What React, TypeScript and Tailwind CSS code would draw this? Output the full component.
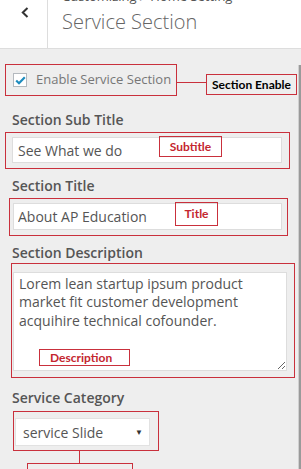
import React from 'react';

const Annotation: React.FC<{ text: string; className: string; dark?: boolean }> = ({ text, className, dark }) => (
  <div
    className={`absolute flex items-center justify-center border border-[#c9303c] bg-white/0 font-['Lato',sans-serif] text-[12px] font-bold ${
      dark ? 'text-black' : 'text-[#c4262f]'
    } ${className}`}
  >
    {text}
  </div>
);

const FieldLabel: React.FC<{ children: React.ReactNode; className?: string }> = ({ children, className }) => (
  <div className={`ml-[12px] text-[14px] leading-[20px] font-semibold text-[#555] ${className ?? ''}`}>{children}</div>
);

export default function App() {
  return (
    <div className="flex h-[469px] w-[301px] flex-col overflow-hidden bg-[#eeeeee] font-['Open_Sans',sans-serif] text-[#555]">
      {/* Header */}
      <header className="flex h-[49px] shrink-0 border-b border-[#dddddd] bg-white">
        <div className="flex h-full w-[48px] justify-center border-r border-[#dddddd] pl-[2px] pt-[7px]">
          <svg width="8" height="11" viewBox="0 0 8 11" fill="none">
            <polyline points="6.5,1 1.8,5.5 6.5,10" stroke="#333" strokeWidth="2" />
          </svg>
        </div>
        <div className="flex flex-col pl-[14px]">
          <span className="-mt-[12px] text-[13px] leading-[16px] text-[#555]">Customizing ▸ Home Setting</span>
          <span className="mt-[4px] text-[20px] font-light leading-[28px] text-[#666]">Service Section</span>
        </div>
      </header>

      <div className="flex flex-1">
        <main className="flex flex-1 flex-col">
          {/* Enable */}
          <div className="relative mt-[15px]">
            <label className="ml-[5px] flex h-[32px] w-[172px] items-center gap-[9px] border border-[#c9303c] pl-[7px]">
              <span className="flex h-[14px] w-[14px] items-center justify-center border border-[#b4b9be] bg-white">
                <svg width="11" height="9" viewBox="0 0 11 9" fill="none">
                  <polyline points="1.2,4.5 4,7.2 9.8,1.2" stroke="#1e8cbe" strokeWidth="2.2" />
                </svg>
              </span>
              <span className="text-[13px] text-[#777]">Enable Service Section</span>
            </label>
            <div className="absolute left-[177px] top-[18px] h-px w-[29px] bg-[#c9303c]" />
            <Annotation text="Section Enable" dark className="left-[206px] top-[10px] h-[21px] w-[91px]" />
          </div>

          {/* Sub title */}
          <FieldLabel className="mt-[14px]">Section Sub Title</FieldLabel>
          <div className="relative ml-[5px] mt-[2px] w-[285px] border border-[#c9303c] pb-[5px] pl-[6px] pr-[7px] pt-[4px]">
            <input
              readOnly
              value="See What we do"
              className="h-[26px] w-full border border-[#dddddd] bg-white pl-[5px] text-[14px] text-[#555] outline-none"
            />
            <Annotation text="Subtitle" className="left-[153px] top-[3px] h-[21px] w-[63px]" />
          </div>

          {/* Title */}
          <FieldLabel className="mt-[7px]">Section Title</FieldLabel>
          <div className="relative ml-[9px] mt-[2px] w-[279px] border border-[#c9303c] pb-[5px] pl-[3px] pr-[5px] pt-[4px]">
            <input
              readOnly
              value="About AP Education"
              className="h-[27px] w-full border border-[#dddddd] bg-white pl-[4px] text-[14px] text-[#555] outline-none"
            />
            <Annotation text="Title" className="left-[165px] top-[3px] h-[24px] w-[43px]" />
          </div>

          {/* Description */}
          <FieldLabel className="mt-[7px]">Section Description</FieldLabel>
          <div className="relative ml-[11px] w-[284px] border border-[#c9303c] pb-[6px] pl-[1px] pr-[7px] pt-[8px]">
            <textarea
              readOnly
              value={'Lorem lean startup ipsum product\nmarket fit customer development\nacquihire technical cofounder.'}
              className="block h-[99px] w-full border border-[#dddddd] bg-white pl-[5px] pt-[2px] text-[14px] leading-[18.3px] text-[#555] outline-none"
            />
            <div className="absolute left-[27px] top-[85px] flex h-[17px] w-[91px] items-center border border-[#c9303c] pl-[10px] font-['Lato',sans-serif] text-[12px] font-bold text-[#c4262f]">
              Description
            </div>
          </div>

          {/* Category */}
          <FieldLabel className="mt-[10px]">Service Category</FieldLabel>
          <div className="ml-[13px] mt-[3px] w-[146px] border border-[#c9303c] pb-[4px] pl-[1px] pt-[6px]">
            <div className="flex h-[28px] w-[135px] items-center justify-between border border-[#e2e2e2] bg-white pl-[7px] pr-[6px] text-[14px] text-[#555]">
              <span>service Slide</span>
              <span className="text-[8px] text-[#333]">▼</span>
            </div>
          </div>
          <div className="ml-[79px] h-[12px] w-px bg-[#c9303c]" />
          <div className="ml-[27px] h-[20px] w-[106px] shrink-0 border border-[#c9303c]" />
        </main>

        {/* window edge */}
        <div className="mt-[16px] w-[3px] border-l border-[#d0d0d0] bg-[#9a9a9a]" />
      </div>
    </div>
  );
}
